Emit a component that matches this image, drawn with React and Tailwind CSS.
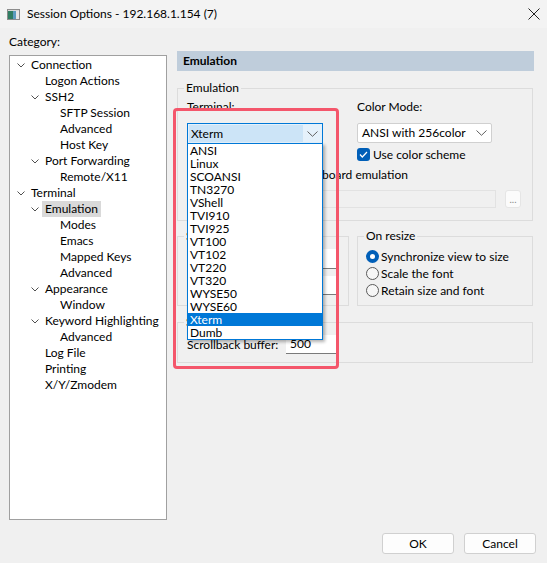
import React from "react";

const FONT = { fontFamily: 'Lato, "Noto Sans", sans-serif' };

const tree = [
  { t: "Connection", l: 0, c: true },
  { t: "Logon Actions", l: 1 },
  { t: "SSH2", l: 1, c: true },
  { t: "SFTP Session", l: 2 },
  { t: "Advanced", l: 2 },
  { t: "Host Key", l: 2 },
  { t: "Port Forwarding", l: 1, c: true },
  { t: "Remote/X11", l: 2 },
  { t: "Terminal", l: 0, c: true },
  { t: "Emulation", l: 1, c: true, sel: true },
  { t: "Modes", l: 2 },
  { t: "Emacs", l: 2 },
  { t: "Mapped Keys", l: 2 },
  { t: "Advanced", l: 2 },
  { t: "Appearance", l: 1, c: true },
  { t: "Window", l: 2 },
  { t: "Keyword Highlighting", l: 1, c: true },
  { t: "Advanced", l: 2 },
  { t: "Log File", l: 1 },
  { t: "Printing", l: 1 },
  { t: "X/Y/Zmodem", l: 1 },
];

const indent = ["pl-[0px]", "pl-[14px]", "pl-[29px]"];

const terminals = [
  "ANSI", "Linux", "SCOANSI", "TN3270", "VShell", "TVI910", "TVI925",
  "VT100", "VT102", "VT220", "VT320", "WYSE50", "WYSE60", "Xterm", "Dumb",
];

function Chevron({ color = "#505050" }) {
  return (
    <svg width="8" height="5" viewBox="0 0 8 5">
      <polyline points="0.5,0.5 4,4 7.5,0.5" fill="none" stroke={color} strokeWidth="1" />
    </svg>
  );
}

function ComboChevron() {
  return (
    <svg width="11" height="6" viewBox="0 0 11 6">
      <polyline points="0.5,0.5 5.5,5.3 10.5,0.5" fill="none" stroke="#606060" strokeWidth="1" />
    </svg>
  );
}

function Radio({ on }) {
  if (on)
    return (
      <span className="w-[13px] h-[13px] rounded-full bg-[#005fb8] flex items-center justify-center">
        <span className="w-[5px] h-[5px] rounded-full bg-white" />
      </span>
    );
  return <span className="w-[13px] h-[13px] rounded-full border border-[#5a5a5a] bg-[#f6f6f6] box-border" />;
}

function Check() {
  return (
    <span className="w-[13px] h-[13px] rounded-[3px] bg-[#005fb8] flex items-center justify-center">
      <svg width="9" height="7" viewBox="0 0 9 7">
        <polyline points="1,3.5 3.3,6 8,1" fill="none" stroke="#fff" strokeWidth="1.2" />
      </svg>
    </span>
  );
}

export default function App() {
  return (
    <div
      className="w-[547px] h-[563px] bg-[#f0f0f0] relative overflow-hidden text-[12px] text-black flex flex-col whitespace-nowrap"
      style={FONT}
    >
      {/* Title bar */}
      <div className="h-[28px] flex items-center bg-[#f3f3f3]">
        <svg className="ml-[7px]" width="13" height="11" viewBox="0 0 13 11">
          <rect x="0.5" y="0.5" width="12" height="10" fill="#d8d8d8" stroke="#8c8c8c" />
          <rect x="1" y="2" width="5" height="8" fill="#2f7d62" />
          <rect x="6" y="2" width="3" height="8" fill="#5b9bbf" />
          <rect x="9" y="2" width="3" height="8" fill="#e6e6e6" />
        </svg>
        <span className="ml-[7px] leading-[16px]">Session Options - 192.168.1.154 (7)</span>
        <svg className="ml-auto mr-[7px]" width="12" height="12" viewBox="0 0 12 12">
          <path d="M0.5 0.5 L11.5 11.5 M11.5 0.5 L0.5 11.5" stroke="#222" strokeWidth="1" />
        </svg>
      </div>

      <div className="flex h-[505px]">
        {/* Left column */}
        <div className="ml-[9px] w-[158px] flex flex-col">
          <div className="mt-[6px] leading-[16px]">Category:</div>
          <div className="mt-[5px] h-[465px] border border-[#a0a0a0] bg-white pt-[1px]">
            {tree.map((n, i) => (
              <div key={i} className={`h-[16px] flex items-center leading-[16px] ${indent[n.l]}`}>
                <span className="w-[21px] flex justify-center">{n.c ? <Chevron /> : null}</span>
                {n.sel ? (
                  <span className="-ml-[3px] px-[3px] bg-[#d9d9d9] leading-[16px]">{n.t}</span>
                ) : (
                  <span>{n.t}</span>
                )}
              </div>
            ))}
          </div>
        </div>

        {/* Right column */}
        <div className="ml-[10px] w-[357px] pt-[23px]">
          <div className="h-[20px] bg-[#bfcddb] pl-[6px] leading-[20px] font-bold">Emulation</div>

          {/* Emulation group */}
          <div className="mt-[17px] w-[356px] h-[133px] border border-[#dcdcdc] relative pt-[10px] pl-[9px]">
            <span className="absolute -top-[9px] left-[6px] px-[2px] bg-[#f0f0f0] leading-[16px]">Emulation</span>
            <div className="flex">
              <div className="w-[136px]">
                <div className="leading-[16px]">Terminal:</div>
                <div className="mt-[8px] relative">
                  <div className="h-[21px] border border-[#0078d7] bg-[#e5f1fb] flex items-center">
                    <div className="w-[114px] h-[17px] ml-[1px] bg-[#cce4f7] pl-[2px] leading-[17px]">Xterm</div>
                    <span className="ml-[4px]"><ComboChevron /></span>
                  </div>
                  {/* Dropdown list */}
                  <div className="absolute left-0 top-[20px] w-[136px] h-[197px] bg-white border border-[#0078d7] shadow-[2px_2px_3px_rgba(0,0,0,0.3)] z-10">
                    {terminals.map((t) => (
                      <div
                        key={t}
                        className={`h-[13px] leading-[13px] pl-[2px] ${t === "Xterm" ? "bg-[#0078d7] text-white" : ""}`}
                      >
                        {t}
                      </div>
                    ))}
                  </div>
                </div>
              </div>
              <div className="ml-[34px] w-[135px]">
                <div className="leading-[16px]">Color Mode:</div>
                <div className="mt-[8px] h-[20px] border border-[#d0d0d0] bg-white flex items-center rounded-[2px]">
                  <span className="pl-[4px] leading-[18px] flex-1">ANSI with 256color</span>
                  <span className="mr-[4px]"><ComboChevron /></span>
                </div>
                <div className="mt-[5px] h-[13px] flex items-center">
                  <Check />
                  <span className="ml-[3px] leading-[16px]">Use color scheme</span>
                </div>
              </div>
            </div>
            <div className="mt-[6px] h-[16px] flex items-center">
              <span className="w-[13px] h-[13px] rounded-[3px] border border-[#5a5a5a] bg-[#f6f6f6] box-border" />
              <span className="ml-[3px] leading-[16px]">Select an alternate keyboard emulation</span>
            </div>
            <div className="mt-[7px] flex items-center">
              <div className="ml-[16px] w-[293px] h-[18px] border border-[#e2e2e2]" />
              <div className="ml-[9px] w-[16px] h-[18px] rounded-[3px] border border-[#e5e5e5] bg-[#fbfbfb] flex items-center justify-center text-[#8a8a8a] text-[10px] leading-[10px]">
                ...
              </div>
            </div>
          </div>

          {/* Size / On resize */}
          <div className="mt-[15px] flex">
            <div className="w-[172px] h-[70px] border border-[#dcdcdc] relative pt-[12px] pl-[9px]">
              <span className="absolute -top-[9px] left-[6px] px-[2px] bg-[#f0f0f0] leading-[16px]">Size</span>
              <div className="h-[20px] flex items-center">
                <span className="w-[99px]">Logical rows:</span>
                <div className="w-[52px] h-[20px] bg-white border-b border-[#7a7a7a] pl-[4px] leading-[19px]">24</div>
              </div>
              <div className="mt-[7px] h-[19px] flex items-center">
                <span className="w-[99px]">Logical columns:</span>
                <div className="w-[52px] h-[19px] bg-white border-b border-[#7a7a7a] pl-[4px] leading-[18px]">80</div>
              </div>
            </div>
            <div className="ml-[8px] w-[176px] h-[70px] border border-[#dcdcdc] relative pt-[11px] pl-[8px]">
              <span className="absolute -top-[9px] left-[6px] px-[2px] bg-[#f0f0f0] leading-[16px]">On resize</span>
              {[
                ["Synchronize view to size", true],
                ["Scale the font", false],
                ["Retain size and font", false],
              ].map(([t, on]) => (
                <div key={t} className="h-[17px] flex items-center">
                  <Radio on={on} />
                  <span className="ml-[2px] leading-[16px]">{t}</span>
                </div>
              ))}
            </div>
          </div>

          {/* Scrollback */}
          <div className="mt-[16px] w-[356px] h-[41px] border border-[#dcdcdc] relative pt-[12px] pl-[9px]">
            <span className="absolute -top-[9px] left-[6px] px-[2px] bg-[#f0f0f0] leading-[16px]">Scrollback</span>
            <div className="h-[19px] flex items-center">
              <span className="w-[99px]">Scrollback buffer:</span>
              <div className="w-[52px] h-[19px] bg-white border-b border-[#7a7a7a] pl-[4px] leading-[18px]">500</div>
            </div>
          </div>
        </div>
      </div>

      {/* Buttons */}
      <div className="flex justify-end pr-[11px]">
        <button className="w-[72px] h-[21px] rounded-[3px] border border-[#d0d0d0] bg-[#fdfdfd] leading-[19px]">OK</button>
        <button className="ml-[10px] w-[72px] h-[21px] rounded-[3px] border border-[#d0d0d0] bg-[#fdfdfd] leading-[19px]">Cancel</button>
      </div>

      {/* Red annotation */}
      <div className="absolute left-[173px] top-[108px] w-[166px] h-[261px] border-[3px] border-[#f4566b] rounded-[4px] z-20 pointer-events-none" />
    </div>
  );
}
